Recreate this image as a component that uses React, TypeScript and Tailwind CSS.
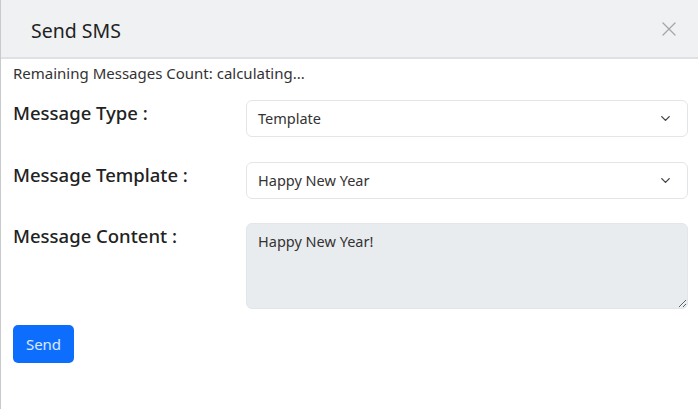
import { ChevronDown, X } from 'lucide-react';

const font = { fontFamily: '"Noto Sans", "Open Sans", sans-serif' };

function SelectBox({ value }: { value: string }) {
  return (
    <div className="flex h-[37px] flex-1 items-center justify-between rounded-[6px] border border-[#e3e6e9] bg-white pl-[11px] pr-[14px] text-[14.5px] text-[#333]">
      <span>{value}</span>
      <ChevronDown className="h-[15px] w-[15px] text-[#444]" strokeWidth={2.2} />
    </div>
  );
}

export default function App() {
  return (
    <div className="h-[409px] w-[698px] overflow-hidden border-l border-[#c8cacd] bg-white" style={font}>
      <div className="flex h-[59px] items-center justify-between border-b-[2px] border-[#dfe2e5] bg-[#f0f1f3] pl-[30px] pr-[17px]">
        <h1 className="pt-[4px] text-[19.5px] text-[#222]">Send SMS</h1>
        <X className="h-[24px] w-[24px] text-[#a4a6a9]" strokeWidth={1.3} />
      </div>

      <div className="pl-[12px] pr-[10px]">
        <p className="mt-[4px] text-[15px] leading-[20px] text-[#333]">Remaining Messages Count: calculating...</p>

        <div className="mt-[17px] flex">
          <label className="w-[233px] -mt-[1px] text-[18.5px] font-medium leading-[28px] text-[#222]">Message Type :</label>
          <SelectBox value="Template" />
        </div>

        <div className="mt-[25px] flex">
          <label className="w-[233px] -mt-[1px] text-[18.5px] font-medium leading-[28px] text-[#222]">Message Template :</label>
          <SelectBox value="Happy New Year" />
        </div>

        <div className="mt-[24px] flex">
          <label className="w-[233px] -mt-[1px] text-[18.5px] font-medium leading-[28px] text-[#222]">Message Content :</label>
          <textarea
            readOnly
            value="Happy New Year!"
            className="h-[86px] flex-1 rounded-[6px] border border-[#e3e6e9] bg-[#e9ecef] px-[11px] py-[7px] text-[14.5px] text-[#333] outline-none"
            style={font}
          />
        </div>

        <button className="mt-[16px] h-[38px] w-[61px] rounded-[5px] bg-[#0d6efd] text-[15px] text-white/85">
          Send
        </button>
      </div>
    </div>
  );
}
